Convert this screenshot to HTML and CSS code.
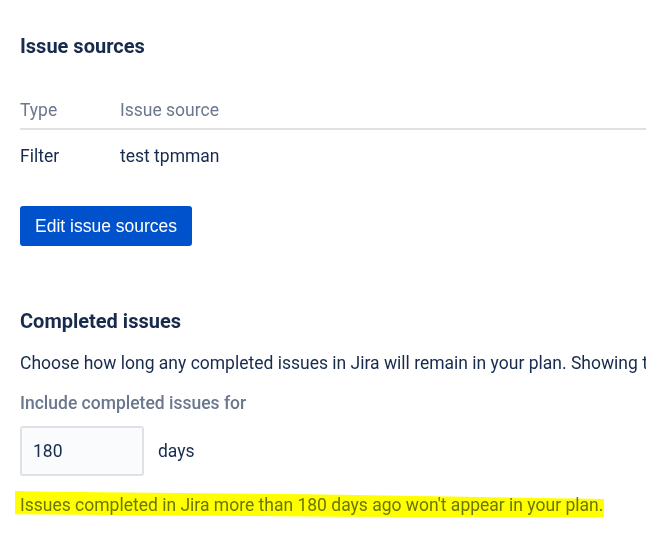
FILE: index.html
```html
<!doctype html>
<html>
<head>
<meta charset="utf-8">
<title>Plan settings</title>
<link rel="stylesheet" href="styles.css">
</head>
<body>
<div class="page">
	<section class="block">
		<h2 class="block_title">Issue sources</h2>
		<table class="sources">
			<thead>
				<tr><th class="col_type">Type</th><th>Issue source</th></tr>
			</thead>
			<tbody>
				<tr><td class="col_type">Filter</td><td>test tpmman</td></tr>
			</tbody>
		</table>
		<button class="btn_primary" type="button">Edit issue sources</button>
	</section>

	<section class="block block_completed">
		<h2 class="block_title">Completed issues</h2>
		<p class="desc">Choose how long any completed issues in Jira will remain in your plan. Showing too many completed issues can slow down your plan.</p>
		<label class="field_label" for="days">Include completed issues for</label>
		<div class="days_row">
			<input class="days_input" id="days" type="text" value="180">
			<span class="days_unit">days</span>
		</div>
		<p class="note"><span class="mark">Issues completed in Jira more than 180 days ago won't appear in your plan.</span></p>
	</section>
</div>
</body>
</html>
```

FILE: styles.css
```css
body {margin: 0; padding: 0; background: #fff; overflow: hidden;}
.page {padding: 0 0 0 20px; width: 900px; font-family: Roboto, "Open Sans", sans-serif; font-size: 17.5px; line-height: 24px; color: #172b4d;}

.block_title {margin: 0; font-size: 20px; line-height: 24px; font-weight: 700; color: #172b4d;}
.block {padding-top: 34px;}
.block_completed {padding-top: 63px;}

/* issue sources table */
.sources {width: 100%; margin-top: 40px; border-collapse: collapse;}
.sources th {padding: 0 0 6px 0; text-align: left; font-weight: 400; color: #6b778c; border-bottom: 2px solid #dfe1e6;}
.sources td {padding: 14px 0 0 0; text-align: left;}
.sources .col_type {width: 100px;}

.btn_primary {display: block; margin-top: 38px; height: 40px; padding: 0 15px; border: 0; border-radius: 3px; background: #0052cc; color: #fff; font-family: "Liberation Sans", Arial, sans-serif; font-size: 17.5px; cursor: pointer;}

/* completed issues */
.desc {margin: 18px 0 0 0; white-space: nowrap;}
.field_label {display: block; margin-top: 16px; font-weight: 500; color: #6b778c;}
.days_row {display: flex; align-items: center; gap: 14px; margin-top: 11px;}
.days_input {box-sizing: border-box; width: 124px; height: 50px; padding: 0 11px; border: 2px solid #dfe1e6; border-radius: 3px; background: #fafbfc; font: inherit; color: #172b4d;}
.days_unit {color: #172b4d;}

.note {margin: 17px 0 0 0; color: #6b778c;}
.mark {position: relative;}
/* marker stroke drawn over the sentence */
.mark::after {content: ""; position: absolute; left: -5px; right: -1px; top: -4px; bottom: -3px; background: #ffff00; mix-blend-mode: multiply; clip-path: polygon(0 0, 6% 3%, 50% 12%, 100% 30%, 100% 100%, 55% 95%, 0 86%);}
```
